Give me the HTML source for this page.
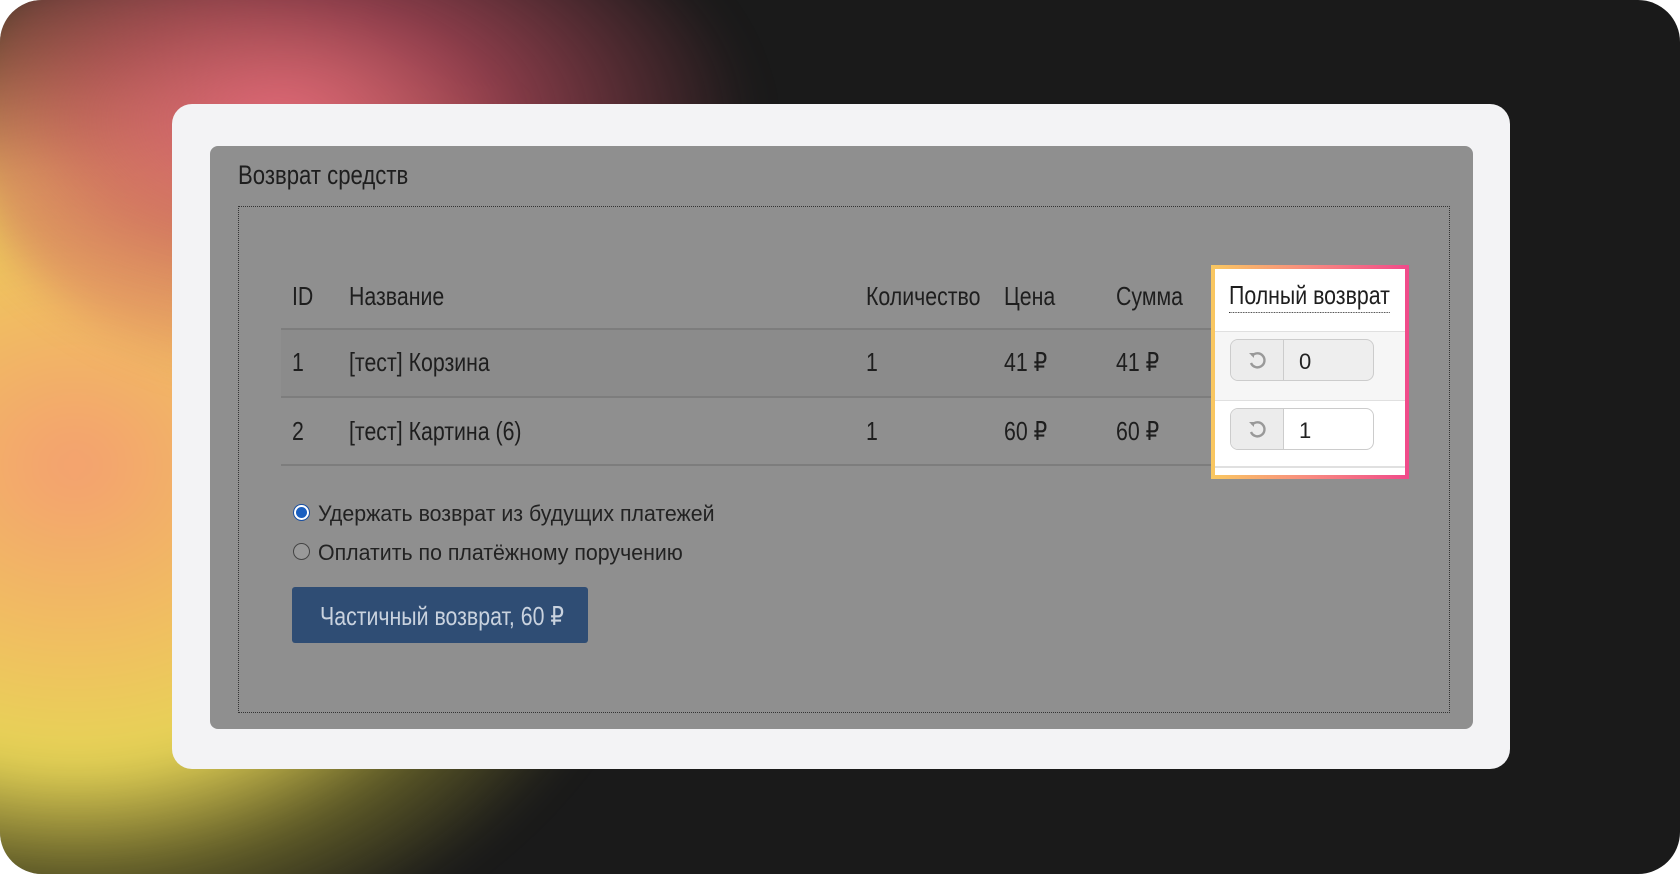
<!DOCTYPE html>
<html><head><meta charset="utf-8"><style>
html,body{margin:0;padding:0;width:1680px;height:874px;overflow:hidden;background:#fff}
.bg{position:absolute;left:0;top:0;width:1680px;height:874px;border-radius:42px;overflow:hidden;background:#1a1a1a}
.blob{position:absolute;left:-420px;top:-60px;width:1100px;height:1050px;border-radius:50%;
background:radial-gradient(ellipse at 45% 50%, #f4a070 0%, #f0c060 25%, #e6d456 40%, rgba(200,190,60,0.4) 55%, rgba(26,26,26,0) 70%);filter:blur(20px)}
.blob2{position:absolute;left:-40px;top:-150px;width:800px;height:540px;border-radius:50%;
background:radial-gradient(ellipse at 40% 50%, #e06878 0%, rgba(200,80,100,0.7) 30%, rgba(26,26,26,0) 70%);filter:blur(20px)}
.card{position:absolute;left:172px;top:104px;width:1338px;height:665px;background:#f3f3f5;border-radius:20px}
.panel{position:absolute;left:210px;top:146px;width:1263px;height:583px;background:#8f8f8f;border-radius:8px}
*{font-family:"Liberation Sans",sans-serif}
.t{position:absolute;color:#1e1e1e;font-size:26px;white-space:nowrap;line-height:1;transform:scaleX(0.82);transform-origin:0 0}
.dots{position:absolute;left:238px;top:206px;width:1212px;height:507px;border:1px dotted #333;box-sizing:border-box}
.line{position:absolute;height:2px;background:#7d7d7d;left:281px;width:930px}
.hl{position:absolute;left:1211px;top:265px;width:198px;height:214px;background:linear-gradient(90deg,#f9c860,#f88a80 50%,#f04a8a);}
.hli{position:absolute;left:4px;top:4px;right:4px;bottom:4px;background:#fff}
.inp{position:absolute;width:142px;height:40px;border:1px solid #ccc;border-radius:8px;background:#fff;overflow:hidden}
.inp .b{position:absolute;left:0;top:0;width:52px;height:40px;background:#ececec;border-right:1px solid #ccc}
.inp .v{position:absolute;left:68px;top:9px;font-size:22px;color:#222}
.radio{position:absolute;width:15px;height:15px;border-radius:50%;border:1px solid #444;background:#999}
.btn{position:absolute;left:292px;top:587px;width:296px;height:56px;background:#2f4d74;border-radius:3px}
.r{font-size:22px;transform:scaleX(0.97)}
</style></head><body>
<div class="bg"><div class="blob"></div><div class="blob2"></div>
<div class="card"></div>
<div class="panel"></div>
<div class="t" style="left:238px;top:162px;font-size:27px">Возврат средств</div>
<div class="dots"></div>
<div class="t" style="left:292px;top:283px">ID</div>
<div class="t" style="left:349px;top:283px">Название</div>
<div class="t" style="left:866px;top:283px">Количество</div>
<div class="t" style="left:1004px;top:283px">Цена</div>
<div class="t" style="left:1116px;top:283px">Сумма</div>
<div class="line" style="top:328px"></div>
<div style="position:absolute;left:281px;top:330px;width:930px;height:66px;background:#8b8b8b"></div>
<div class="line" style="top:396px"></div>
<div class="line" style="top:464px"></div>
<div class="t" style="left:292px;top:349px">1</div>
<div class="t" style="left:349px;top:349px">[тест] Корзина</div>
<div class="t" style="left:866px;top:349px">1</div>
<div class="t" style="left:1004px;top:349px">41 ₽</div>
<div class="t" style="left:1116px;top:349px">41 ₽</div>
<div class="t" style="left:292px;top:418px">2</div>
<div class="t" style="left:349px;top:418px">[тест] Картина (6)</div>
<div class="t" style="left:866px;top:418px">1</div>
<div class="t" style="left:1004px;top:418px">60 ₽</div>
<div class="t" style="left:1116px;top:418px">60 ₽</div>
<div class="hl"><div class="hli">
<div style="position:absolute;left:0;top:62px;width:190px;height:1px;background:#e0e0e0"></div>
<div style="position:absolute;left:0;top:63px;width:190px;height:68px;background:#f6f6f6"></div>
<div style="position:absolute;left:0;top:131px;width:190px;height:1px;background:#e0e0e0"></div>
<div style="position:absolute;left:0;top:197px;width:190px;height:2px;background:#e0e0e0"></div>
</div></div>
<div class="t" style="left:1229px;top:282px;border-bottom:1px dotted #333;padding-bottom:4px">Полный возврат</div>
<div class="inp" style="left:1230px;top:339px;background:#eee"><div class="b"></div><div class="v">0</div>
<svg style="position:absolute;left:15px;top:9px" width="22" height="22" viewBox="0 0 22 22"><path d="M6 7 A7 7 0 1 1 5 14" fill="none" stroke="#999" stroke-width="2.4"/><path d="M3 4 L8 4 L8 9 Z" fill="#999"/></svg></div>
<div class="inp" style="left:1230px;top:408px"><div class="b"></div><div class="v">1</div>
<svg style="position:absolute;left:15px;top:9px" width="22" height="22" viewBox="0 0 22 22"><path d="M6 7 A7 7 0 1 1 5 14" fill="none" stroke="#999" stroke-width="2.4"/><path d="M3 4 L8 4 L8 9 Z" fill="#999"/></svg></div>
<div class="radio" style="left:293px;top:504px;background:#fff;border-color:#1a4fa0"><div style="position:absolute;left:2px;top:2px;width:11px;height:11px;border-radius:50%;background:#1a5fc0"></div></div>
<div class="t r" style="left:318px;top:503px;color:#222">Удержать возврат из будущих платежей</div>
<div class="radio" style="left:293px;top:543px"></div>
<div class="t r" style="left:318px;top:542px;color:#222">Оплатить по платёжному поручению</div>
<div class="btn"></div>
<div class="t" style="left:320px;top:603px;color:#c9d2de">Частичный возврат, 60 ₽</div>
</div>
</body></html>
